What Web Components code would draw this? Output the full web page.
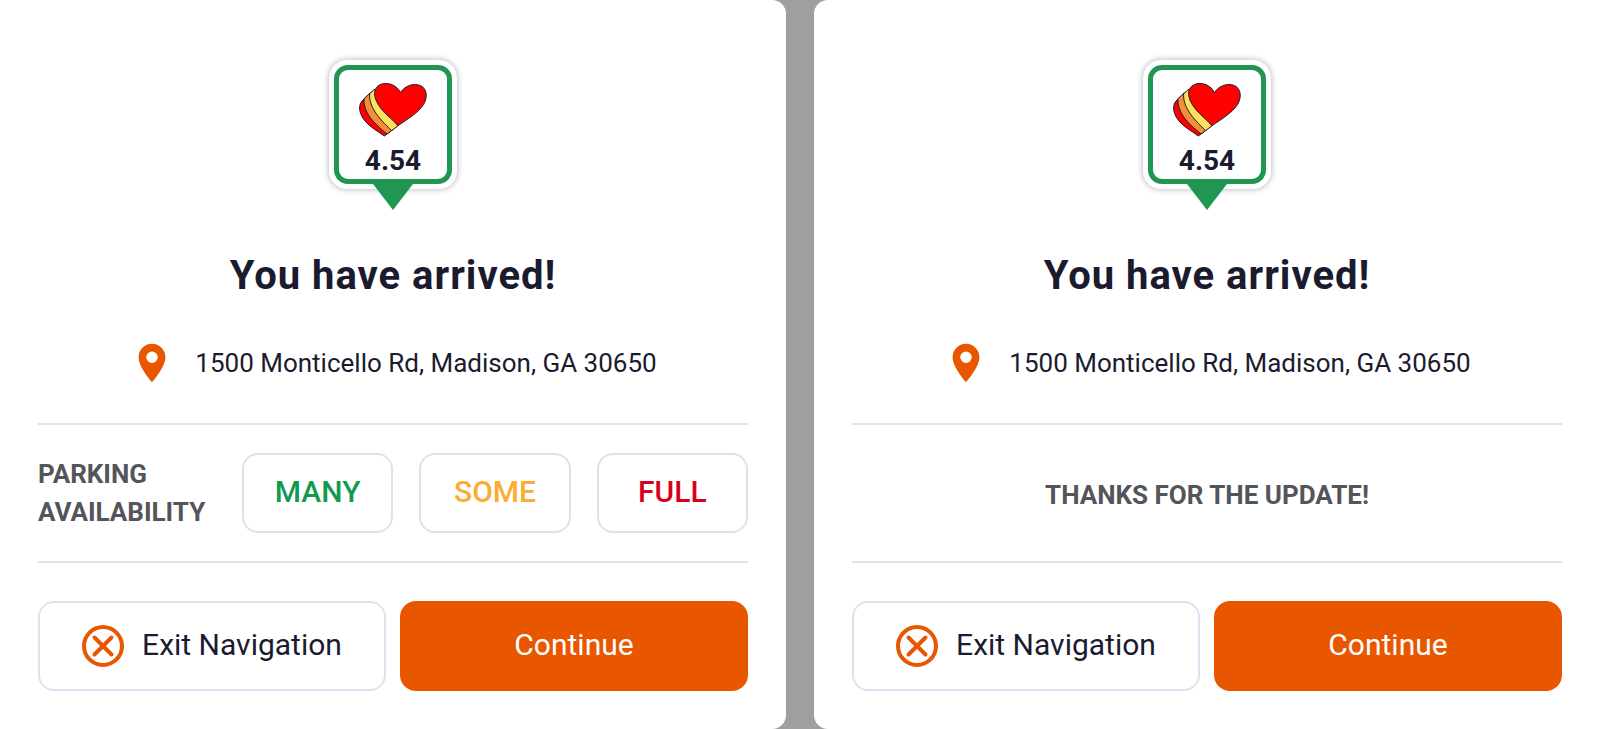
<!DOCTYPE html>
<html lang="en">
<head>
<meta charset="utf-8">
<meta name="viewport" content="width=device-width, initial-scale=1">
<title>You have arrived</title>
<style>
  body {
    margin: 0;
    background: #9f9f9f;
    font-family: Roboto, "Liberation Sans", sans-serif;
    color: #1b1b2f;
  }
</style>
</head>
<body>
<arrival-board>
  <arrival-card price="4.54" address="1500 Monticello Rd, Madison, GA 30650">
    <parking-survey></parking-survey>
  </arrival-card>
  <arrival-card price="4.54" address="1500 Monticello Rd, Madison, GA 30650">
    <survey-thanks>THANKS FOR THE UPDATE!</survey-thanks>
  </arrival-card>
</arrival-board>

<script>
class ShadowElement extends HTMLElement {
  constructor() {
    super();
    this.attachShadow({ mode: 'open' }).innerHTML = this.render();
  }
  render() { return '<slot></slot>'; }
}

customElements.define('arrival-board', class extends ShadowElement {
  render() {
    return `
      <style>
        :host { display: grid; grid-template-columns: 1fr 1fr; gap: 28px; min-height: 100vh; }
        ::slotted(:first-child) { border-radius: 0 14px 14px 0; }
        ::slotted(:last-child) { border-radius: 14px 0 0 14px; }
      </style>
      <slot></slot>`;
  }
});

customElements.define('price-pin', class extends ShadowElement {
  render() {
    return `
      <style>
        :host { display: flex; flex-direction: column; align-items: center; }
        .plate {
          padding: 5px; border-radius: 18px; background: #fff;
          box-shadow: 0 0 6px rgba(0, 0, 20, .32);
        }
        .frame {
          box-sizing: border-box; width: 118px; height: 119px; padding-top: 11px;
          display: flex; flex-direction: column; align-items: center; gap: 8px;
          border: 5px solid #219653; border-radius: 14px;
        }
        .heart { display: block; width: 70px; height: 56px; flex: none; }
        .price { font-size: 28px; line-height: 32px; font-weight: 700; }
        .tip { display: block; width: 40px; height: 26px; margin-top: -5px; position: relative; }
      </style>
      <div class="plate">
        <div class="frame">
          <svg class="heart" viewBox="18 14 210 168" aria-hidden="true">
            <g stroke="#1b1b2f" stroke-width="3" stroke-linejoin="round">
              <path fill="#f00" d="M68 40L33 71C17 87 21 109 36 130C52 152 76 163 97 179L138 148Z"/>
              <path fill="#f2903a" d="M55 49L36 67C34 108 62 138 105 173L122 160Z"/>
              <path fill="#fde15d" d="M69 38L53 52C50 90 78 124 119 163L138 148Z"/>
              <path fill="#f00" d="M145 49C134 21 91 12 74 33C61 50 70 77 91 101C105 117 123 131 138 148C166 129 199 109 215 84C230 58 223 29 196 25C173 22 155 34 145 49Z"/>
            </g>
          </svg>
          <span class="price"><slot></slot></span>
        </div>
      </div>
      <svg class="tip" viewBox="0 0 40 26" aria-hidden="true"><path fill="#219653" d="M0 0H40L20 26Z"/></svg>`;
  }
});

customElements.define('place-line', class extends ShadowElement {
  render() {
    return `
      <style>
        :host { display: flex; align-items: center; justify-content: center; gap: 20px; font-size: 26px; line-height: 38px; }
        svg { width: 46px; height: 46px; flex: none; }
      </style>
      <svg viewBox="0 0 24 24" aria-hidden="true">
        <path fill="#e95600" fill-rule="evenodd" d="M12 2C8.13 2 5 5.13 5 9c0 5.25 7 13 7 13s7-7.75 7-13c0-3.87-3.13-7-7-7zm0 10a3 3 0 1 1 0-6 3 3 0 0 1 0 6z"/>
      </svg>
      <span><slot></slot></span>`;
  }
});

customElements.define('parking-survey', class extends ShadowElement {
  render() {
    return `
      <style>
        :host { display: flex; align-items: center; }
        .label {
          flex: 0 0 204px; margin: 0; color: #54555a;
          font-size: 26px; line-height: 38px; font-weight: 700;
        }
        .choices { flex: 1; display: grid; grid-template-columns: repeat(3, 1fr); gap: 26px; }
        button {
          height: 80px; padding: 0 0 2px; border: 2px solid #d9e4f0; border-radius: 16px;
          background: #fff; color: inherit; font: 500 30px/36px Roboto, "Liberation Sans", sans-serif;
        }
        .many { color: #149950; }
        .some { color: #fbac33; }
        .full { color: #d9001b; }
      </style>
      <p class="label" id="label">PARKING<br>AVAILABILITY</p>
      <div class="choices" role="group" aria-labelledby="label">
        <button type="button" class="many">MANY</button>
        <button type="button" class="some">SOME</button>
        <button type="button" class="full">FULL</button>
      </div>`;
  }
});

customElements.define('survey-thanks', class extends ShadowElement {
  render() {
    return `
      <style>
        :host { display: block; padding-top: 4px; color: #54555a; text-align: center; font-size: 26px; line-height: 38px; font-weight: 700; }
      </style>
      <slot></slot>`;
  }
});

customElements.define('card-actions', class extends ShadowElement {
  render() {
    return `
      <style>
        :host { display: grid; grid-template-columns: 1fr 1fr; gap: 14px; }
        button {
          height: 90px; padding: 0; border-radius: 16px;
          display: flex; align-items: center; justify-content: center; gap: 18px;
          font: 400 30px/36px Roboto, "Liberation Sans", sans-serif;
        }
        span { padding-bottom: 2px; }
        .exit { border: 2px solid #d9e4f0; background: #fff; color: #1b1b2f; }
        .go { border: 0; background: #e95600; color: #fff; }
        svg { width: 42px; height: 42px; flex: none; }
      </style>
      <button type="button" class="exit">
        <svg viewBox="0 0 42 42" fill="none" stroke="#e95600" aria-hidden="true">
          <circle cx="21" cy="21" r="19" stroke-width="4"/>
          <path stroke-width="4" stroke-linecap="round" d="M12.5 12.5l17 17M29.5 12.5l-17 17"/>
        </svg>
        <span>Exit Navigation</span>
      </button>
      <button type="button" class="go"><span>Continue</span></button>`;
  }
});

customElements.define('arrival-card', class extends ShadowElement {
  render() {
    return `
      <style>
        :host { display: block; box-sizing: border-box; padding: 60px 38px 38px; background: #fff; }
        h1 {
          margin: 42px 0 40px; text-align: center; letter-spacing: 1px;
          font-size: 40px; line-height: 48px; font-weight: 700;
        }
        .update {
          box-sizing: border-box; min-height: 140px; margin: 37px 0 38px; padding: 28px 0;
          display: grid; align-items: center;
          border: solid #d9e4ec; border-width: 2px 0;
        }
      </style>
      <price-pin>${this.getAttribute('price')}</price-pin>
      <h1>You have arrived!</h1>
      <place-line>${this.getAttribute('address')}</place-line>
      <div class="update"><slot></slot></div>
      <card-actions></card-actions>`;
  }
});
</script>
</body>
</html>
